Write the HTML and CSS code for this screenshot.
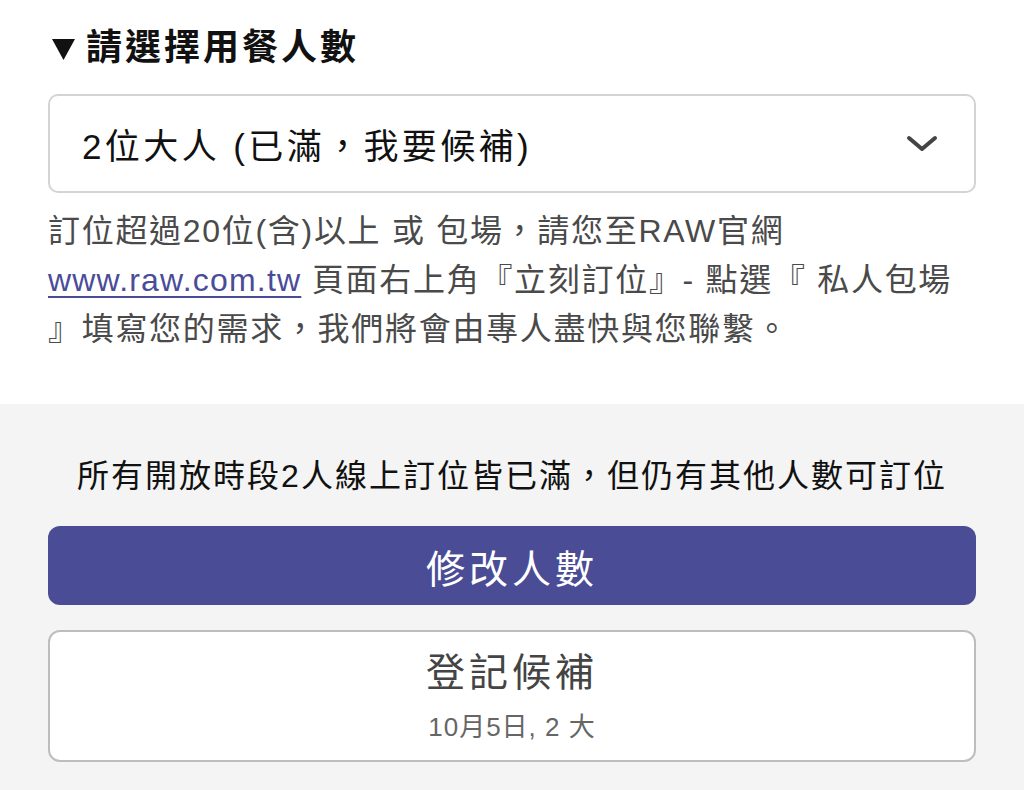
FILE: index.html
```html
<!DOCTYPE html>
<html lang="zh-Hant">
<head>
<meta charset="utf-8">
<link rel="stylesheet" href="styles.css">
</head>
<body>
<section class="top">
  <h2 class="heading"><svg class="tri" width="23" height="21" viewBox="0 0 23 21"><path d="M0 0 H23 L11.5 21 Z" fill="#111"/></svg>請選擇用餐人數</h2>
  <div class="select">
    <span class="select-text">2位大人 (已滿，我要候補)</span>
    <svg class="chev" width="32" height="18" viewBox="0 0 32 18"><path d="M3 3 L16 14 L29 3" fill="none" stroke="#444" stroke-width="4" stroke-linecap="round" stroke-linejoin="round"/></svg>
  </div>
  <p class="note">訂位超過20位(含)以上 或 包場，請您至RAW官網<br><a class="link" href="#">www.raw.com.tw</a> 頁面右上角『立刻訂位』- 點選『 私人包場<br>』填寫您的需求，我們將會由專人盡快與您聯繫。</p>
</section>
<section class="bottom">
  <p class="msg">所有開放時段2人線上訂位皆已滿，但仍有其他人數可訂位</p>
  <button class="btn primary">修改人數</button>
  <button class="btn secondary">
    <span class="btn-title">登記候補</span>
    <span class="btn-sub">10月5日, 2 大</span>
  </button>
</section>
</body>
</html>
```
FILE: styles.css
```css
html, body {
  margin: 0;
  padding: 0;
  background: #ffffff;
  font-family: "Liberation Sans", "Noto Sans CJK TC", sans-serif;
}
.top {
  padding: 28px 48px 50px;
}
.heading {
  margin: 0;
  font-size: 36px;
  line-height: 40px;
  font-weight: 700;
  color: #111;
  letter-spacing: 3px;
  display: flex;
  align-items: center;
}
.tri {
  display: block;
  margin-left: 4px;
  margin-right: 11px;
  margin-top: 2px;
}
.select {
  margin-top: 26px;
  height: 99px;
  box-sizing: border-box;
  border: 2px solid #d4d4d4;
  border-radius: 10px;
  display: flex;
  align-items: center;
  justify-content: space-between;
  padding: 0 36px 0 32px;
}
.select-text {
  font-size: 35px;
  letter-spacing: 3.4px;
  color: #111;
}
.chev {
  display: block;
}
.note {
  margin: 14px 0 0;
  font-size: 32px;
  line-height: 49px;
  letter-spacing: 1.7px;
  color: #4a4a4a;
}
.link {
  color: #4a4c9a;
  text-decoration: underline;
  text-underline-offset: 5px;
  text-decoration-thickness: 2px;
  letter-spacing: 1.2px;
}
.bottom {
  background: #f4f4f4;
  padding: 48px 48px 28px;
  display: flex;
  flex-direction: column;
}
.msg {
  margin: 0;
  text-align: center;
  font-size: 32px;
  line-height: 48px;
  letter-spacing: 2px;
  color: #111;
}
.btn {
  font-family: inherit;
  width: 100%;
  box-sizing: border-box;
  border-radius: 12px;
  cursor: pointer;
}
.primary {
  margin-top: 26px;
  height: 79px;
  border: none;
  background: #4a4c95;
  color: #fff;
  font-size: 39px;
  letter-spacing: 4px;
}
.secondary {
  margin-top: 25px;
  height: 132px;
  border: 2px solid #bdbdbd;
  background: #fff;
  display: flex;
  flex-direction: column;
  align-items: center;
  justify-content: center;
  gap: 12px;
}
.btn-title {
  font-size: 39px;
  line-height: 50px;
  letter-spacing: 4px;
  color: #444;
}
.btn-sub {
  font-size: 26px;
  line-height: 34px;
  letter-spacing: 1px;
  color: #666;
}
```
